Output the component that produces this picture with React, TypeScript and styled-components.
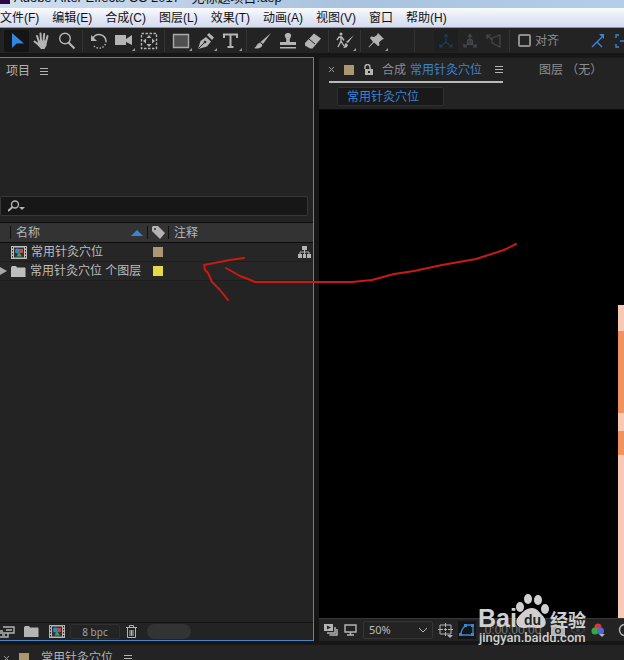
import React from 'react';
import styled, { createGlobalStyle } from 'styled-components';

const Global = createGlobalStyle`
  * { box-sizing: border-box; }
  body { margin: 0; background: #161616; }
  body, button, input, select, table {
    font-family: "Liberation Sans", "Noto Sans CJK SC", sans-serif;
    font-size: 12px;
    line-height: 16px;
  }
  button { border: 0; padding: 0; background: none; color: inherit; }
  svg { display: block; flex: none; }
`;

const Page = styled.div`
  position: relative;
  display: flex;
  flex-direction: column;
  height: 100vh;
  overflow: hidden;
  color: #b4b4b4;
  white-space: nowrap;
`;
const TitleBar = styled.header`
  display: flex;
  align-items: flex-end;
  gap: 4px;
  height: 8px;
  flex: none;
  overflow: hidden;
  background: linear-gradient(90deg, #d3dfef, #a9c3df 55%, #b3cee8);
  color: #111;
  font-size: 13px;
`;
const AppBadge = styled.span`
  width: 10px;
  height: 8px;
  border-bottom: 4px solid #d3dfef;
  background: #2a0b45;
`;
const TitleText = styled.span`
  line-height: 16px;
  margin-bottom: 2px;
`;
const MenuBar = styled.nav`
  display: flex;
  gap: 13px;
  align-items: center;
  height: 20px;
  flex: none;
  background: linear-gradient(#fafbfe, #e4e9f5 50%, #d5dcee);
  border-bottom: 1px solid #8f94a0;
  color: #111;
`;
const MenuItem = styled.button`
  color: #111;
`;
const Toolbar = styled.div`
  display: flex;
  align-items: center;
  height: 25px;
  flex: none;
  padding-left: 4px;
  background: #232323;
  overflow: hidden;
`;
const Tool = styled.button<{ $active?: boolean; $dim?: boolean }>`
  position: relative;
  display: grid;
  place-items: center;
  width: ${p => (p.$dim ? 24 : 25)}px;
  height: 22px;
  flex: none;
  color: ${p => (p.$dim ? (p.$active ? '#1f3c55' : '#45484b') : '#b4b4b4')};
  background: ${p => (p.$active ? (p.$dim ? '#1d1f21' : '#151515') : 'transparent')};
  border-radius: 2px;
`;
const Corner = styled.span`
  position: absolute;
  right: 1px;
  bottom: 1px;
  border-left: 3px solid transparent;
  border-bottom: 3px solid #9a9a9a;
`;
const Divider = styled.span<{ $wide?: boolean }>`
  width: 1px;
  height: 22px;
  margin: 0 ${p => (p.$wide ? 19 : 3)}px 0 ${p => (p.$wide ? 25 : 3)}px;
  background: #343434;
  flex: none;
`;
const SnapLabel = styled.label`
  display: flex;
  align-items: center;
  gap: 4px;
  margin: 0 32px 0 5px;
  color: #8d8d8d;
`;
const Check = styled.input`
  appearance: none;
  width: 13px;
  height: 13px;
  margin: 0;
  border: 2px solid #8d8d8d;
  border-radius: 2px;
`;
const SnapIcons = styled.div`
  display: flex;
  gap: 10px;
  color: #3b86d8;
`;
const Workspace = styled.main`
  display: flex;
  flex: 1;
  gap: 5px;
  min-height: 0;
  padding: 4px 0;
  background: #161616;
`;
const ProjectPanel = styled.section`
  display: flex;
  flex-direction: column;
  width: 314px;
  flex: none;
  background: #232323;
  border: solid #4787c8;
  border-width: 1px 1px 1px 0;
`;
const PanelHead = styled.div`
  display: flex;
  align-items: center;
  gap: 10px;
  height: 26px;
  padding-left: 6px;
`;
const Preview = styled.div`
  height: 112px;
`;
const SearchBox = styled.div`
  display: flex;
  align-items: center;
  gap: 4px;
  height: 20px;
  margin: 0 5px 6px 0;
  padding-left: 7px;
  background: #171717;
  border: 1px solid #373737;
  border-radius: 2px;
`;
const SearchInput = styled.input`
  flex: 1;
  height: 15px;
  border: 0;
  outline: 0;
  padding: 0;
  background: transparent;
  color: #ccc;
`;
const Items = styled.table`
  width: 100%;
  table-layout: fixed;
  border-collapse: collapse;
  text-align: left;
  td, th { padding: 0; font-weight: 400; }
`;
const HeadRow = styled.tr`
  height: 20px;
  background: #333;
  border: solid #0c0c0c;
  border-width: 1px 0;
`;
const HeadCell = styled.th`
  width: ${p => p.width}px;
`;
const HeadInner = styled.div<{ $pad?: number }>`
  display: flex;
  align-items: center;
  justify-content: space-between;
  height: 13px;
  padding: 0 4px 0 ${p => p.$pad ?? 5}px;
  border-left: 1px solid #111;
`;
const ItemRow = styled.tr`
  height: 19px;
  border-bottom: 1px solid #1d1d1d;
  background: #262626;
`;
const NameInner = styled.div`
  display: flex;
  align-items: center;
  gap: 4px;
  color: #bdbdbd;
`;
const Twirl = styled.span<{ $shown?: boolean }>`
  width: 7px;
  height: 8px;
  border-left: 7px solid ${p => (p.$shown ? '#aaa' : 'transparent')};
  border-top: 4px solid transparent;
  border-bottom: 4px solid transparent;
`;
const Swatch = styled.span<{ $color: string }>`
  display: block;
  width: 10px;
  height: 10px;
  flex: none;
  background: ${p => p.$color};
`;
const RowEnd = styled.div`
  display: flex;
  justify-content: flex-end;
  padding-right: 2px;
`;
const TagCell = styled.td`
  > span { margin-left: 6px; }
`;
const ProjectFoot = styled.footer`
  display: flex;
  align-items: center;
  height: 18px;
  margin-top: auto;
  gap: 9px;
  border-top: 1px solid #111;
`;
const Depth = styled.button`
  width: 50px;
  height: 15px;
  margin: 0 -4px;
  border: 1px solid #303030;
  border-radius: 2px;
  font-family: "Noto Sans", sans-serif;
  font-size: 10px;
  line-height: 12px;
  color: #9aa5ad;
`;
const ScrollThumb = styled.span`
  width: 44px;
  height: 15px;
  border-radius: 8px;
  background: #333;
`;
const CompPanel = styled.section`
  display: flex;
  flex-direction: column;
  flex: 1;
  min-width: 0;
  background: #232323;
  border-top: 1px solid #1b1b1b;
`;
const Tabs = styled.div`
  display: flex;
  gap: 36px;
  height: 25px;
  padding-left: 10px;
`;
const ActiveTab = styled.div`
  display: flex;
  align-items: center;
  height: 25px;
  border-bottom: 2px solid #b9b9b9;
`;
const CloseButton = styled.button`
  width: 6px;
  margin-right: 9px;
  color: #999;
`;
const LockButton = styled.button`
  margin: 0 9px 0 10px;
`;
const TabWord = styled.span`
  margin-right: 4px;
  color: #8d8d8d;
`;
const Blue = styled.span`
  color: #3c84d4;
`;
const MenuButton = styled.button<{ $gap?: number }>`
  margin-left: ${p => p.$gap ?? 0}px;
`;
const QuietTab = styled.button`
  height: 24px;
  color: #8d8d8d;
`;
const Crumbs = styled.div`
  padding: 4px 0 3px 18px;
  border-bottom: 1px solid #0c0c0c;
`;
const Crumb = styled.button`
  display: block;
  width: 107px;
  height: 19px;
  padding-left: 9px;
  text-align: left;
  background: #191919;
  border: 1px solid #303030;
  border-radius: 2px;
  color: #3c84d4;
`;
const Viewer = styled.div`
  display: flex;
  justify-content: flex-end;
  flex: 1;
  padding-top: 195px;
  background: #000;
`;
const Artwork = styled.div`
  width: 6px;
  background: linear-gradient(#f8c9b5 0 26px, #f0935f 26px 108px, #f8c9b5 108px 126px, #f0935f 126px 150px, #f8c9b5 150px);
`;
const CompFoot = styled.footer`
  display: flex;
  align-items: center;
  height: 23px;
  padding-left: 4px;
  gap: 5px;
  overflow: hidden;
  border-top: 1px solid #383838;
`;
const ZoomBox = styled.div`
  display: flex;
  align-items: center;
  width: 70px;
  height: 18px;
  padding-right: 5px;
  border: 1px solid #353535;
  border-radius: 2px;
  flex: none;
`;
const ZoomSelect = styled.select`
  appearance: none;
  flex: 1;
  min-width: 0;
  padding: 0 0 0 5px;
  border: 0;
  background: transparent;
  color: #bbb;
  font-family: "Noto Sans", sans-serif;
  font-size: 11px;
`;
const FootTool = styled.button<{ $boxed?: boolean; $w?: number }>`
  display: grid;
  place-items: center;
  width: ${p => p.$w ?? 15}px;
  height: 18px;
  flex: none;
  background: ${p => (p.$boxed ? '#141414' : 'none')};
`;
const Timecode = styled.button`
  width: 64px;
  flex: none;
  color: #777;
`;
const BottomPanel = styled.section`
  display: flex;
  align-items: flex-start;
  height: 15px;
  flex: none;
  overflow: hidden;
  padding: 5px 0 0 4px;
  background: #232323;
`;
const BottomTab = styled.div`
  display: flex;
  align-items: center;
`;
const BottomTitle = styled.span`
  margin: 0 11px 0 12px;
`;
const Annotation = styled.svg`
  position: absolute;
  left: 200px;
  top: 240px;
`;
const Watermark = styled.svg`
  position: absolute;
  left: 476px;
  top: 590px;
`;

const I = ({ w = 18, h = 18, children }: { w?: number; h?: number; children: React.ReactNode }) => (
  <svg width={w} height={h} viewBox={`0 0 ${w} ${h}`} fill="none" stroke="currentColor" strokeWidth="1.4" aria-hidden="true">
    {children}
  </svg>
);
const fill = { fill: 'currentColor', stroke: 'none' };

const ListIcon = () => <I w={8} h={9}><path d="M0 1.5h8M0 4.5h8M0 7.5h8" strokeWidth="1" /></I>;
const FilmIcon = () => (
  <I w={16} h={13}>
    <path d="M0 0h16v13H0z" {...fill} />
    <path d="M1.5 1v12M14.5 1v12" stroke="#222" strokeWidth="1" strokeDasharray="1.5 1.5" />
    <path d="M3 1.5h10v10H3z" fill="#333" stroke="none" />
    <circle cx="6.5" cy="5" r="2.5" fill="#3486cf" stroke="none" />
    <path d="M8 3h4v4H8z" fill="#c54b36" stroke="none" />
    <path d="M5.5 10.5 8 6l3 4.5z" fill="#3fa05a" stroke="none" />
  </I>
);
const FolderIcon = () => <I w={15} h={11}><path d="M0 1.5 1 0h4l1 1.5h8l.5.5v9H0z" {...fill} /></I>;

const axis = <path d="M9 10V3M9 10l-6 5M9 10l6 5M7 5l2-2.500L11 5M3 12v3h3M15 12v3h-3" strokeWidth="1.2" />;

const tools: Record<string, React.ReactNode> = {
  选取: <path d="M4 1v15l4.5-4.5H16z" fill="#3186e0" stroke="none" />,
  手形: (
    <g strokeLinecap="round" strokeWidth="2">
      <path d="M6 10 4 4M8 9 7.500 1.500M10.500 9l.700-7M13 10l1.500-6M6 13 1.500 9.500" />
      <path d="M5 8.500h9l-.5 5-2 3.500H8l-3.500-4z" {...fill} />
    </g>
  ),
  缩放: <g><circle cx="7" cy="6.500" r="5.300" /><path d="m10.500 10.500 6 6" strokeWidth="2.200" /></g>,
  旋转: (
    <g>
      <path d="M3 6a7 7 0 0 1 13 3" strokeWidth="1.600" />
      <path d="M16 9a7 7 0 0 1-12 5" strokeDasharray="1.500 1.500" />
      <path d="M1 3v6h6z" {...fill} />
    </g>
  ),
  摄像机: <path d="M0 3h11v4l6-4v10l-6-3v3H0z" {...fill} />,
  锚点: (
    <g>
      <path d="M1.500 1.500h15v15h-15z" strokeDasharray="2.500 1.500" />
      <path d="M9 3l2.500 3h-5zM9 15l2.500-3h-5zM3 9l3-2.500v5zM15 9l-3-2.500v5z" {...fill} />
    </g>
  ),
  矩形: <path d="M1.500 2.500h15v13h-15z" fill="#505050" stroke="#aaa" />,
  钢笔: (
    <g>
      <path d="M1 17 3.500 9 9 5l5 4.500-4 5z" {...fill} />
      <path d="m10 3 2-2 5 4.500-2 2.500z" {...fill} />
      <path d="m1.500 16.500 6-6" stroke="#232323" strokeWidth="1" />
      <circle cx="8" cy="10" r="1.300" fill="#232323" stroke="none" />
    </g>
  ),
  文字: <path d="M2 6V2.500h13V6M8.500 3v12M5.500 15h6" strokeWidth="2" />,
  画笔: <path d="M17 1 9 12l-2.500-2zM6 10.500 8.500 13C7 17 3 17 0 16c3-1 2-4 6-5.500z" {...fill} />,
  图章: <path d="M9 1c3 0 4 2.500 2.500 4.500-1 1.500-1 3-.5 4.500h6v3H1v-3h6c.5-1.500.5-3-.5-4.500C5 3.500 6 1 9 1zM1 15h16v1.500H1z" {...fill} />,
  橡皮擦: <g><path d="m1 11 9-9.500 7 5-8.500 10H6l-5-3z" {...fill} /><path d="m5 7 6 5" stroke="#232323" strokeWidth="1" /></g>,
  动态笔刷: (
    <g>
      <circle cx="5" cy="2" r="1.500" {...fill} />
      <path d="M5 4v5l-3 6M5 9l3 5M1 8l2-3 3 .500 2 3" />
      <path d="m18 3-6 8-2-1zM10 11l2 2c-1 3-3 3-5 3 2-1 1-4 3-5z" {...fill} />
    </g>
  ),
  操控点: <path d="m10 1 6 6-2 .5-3 3 .5 3-1.500.500-4-3.500-5 5-.500-.500 4.500-5L2 6l1-1.500 3 .500L9 3z" {...fill} />,
};
const flyouts = ['摄像机', '矩形', '钢笔', '文字', '动态笔刷', '操控点'];
const groups = [['选取', '手形', '缩放'], ['旋转', '摄像机', '锚点'], ['矩形', '钢笔', '文字'], ['画笔', '图章', '橡皮擦'], ['动态笔刷'], ['操控点']];
const menus = ['文件(F)', '编辑(E)', '合成(C)', '图层(L)', '效果(T)', '动画(A)', '视图(V)', '窗口', '帮助(H)'];
const rows = [
  { name: '常用针灸穴位', color: '#ab9873', folder: false },
  { name: '常用针灸穴位 个图层', color: '#e3d94b', folder: true },
];

export default function App() {
  return (
    <Page>
      <Global />
      <TitleBar><AppBadge /><TitleText>Adobe After Effects CC 2017 - 无标题项目.aep</TitleText></TitleBar>
      <MenuBar>{menus.map(m => <MenuItem key={m}>{m}</MenuItem>)}</MenuBar>
      <Toolbar>
        {groups.map((group, i) => (
          <React.Fragment key={group[0]}>
            {i > 0 && <Divider />}
            {group.map(name => (
              <Tool key={name} $active={name === '选取'} aria-label={name}>
                <I>{tools[name]}</I>
                {flyouts.includes(name) && <Corner />}
              </Tool>
            ))}
          </React.Fragment>
        ))}
        <Divider $wide />
        <Tool $dim $active aria-label="本地轴"><I>{axis}</I></Tool>
        <Tool $dim aria-label="世界轴"><I>{axis}<circle cx="9" cy="10" r="2.500" /></I></Tool>
        <Tool $dim aria-label="视图轴"><I><path d="M7 6l8-3v12l-8-4zM7 8 2 3M2 7V3h4" strokeWidth="1.200" /></I></Tool>
        <Divider />
        <SnapLabel><Check type="checkbox" />对齐</SnapLabel>
        <SnapIcons>
          <I w={14} h={14}><path d="m1 13 5-5 5 5M6 8l5-5" /><path d="M8 0h5v5z" {...fill} /></I>
          <I w={14} h={14}><path d="M4 1H1v3M1 10v3h3M10 1h3v3M5 7h4" /></I>
        </SnapIcons>
      </Toolbar>
      <Workspace>
        <ProjectPanel>
          <PanelHead><span>项目</span><MenuButton aria-label="面板菜单"><ListIcon /></MenuButton></PanelHead>
          <Preview />
          <SearchBox>
            <I w={17} h={12}><circle cx="7" cy="4.500" r="3.500" /><path d="M4.500 7 0 11" strokeWidth="2" /><path d="M11 7h6l-3 3z" {...fill} /></I>
            <SearchInput aria-label="搜索" />
          </SearchBox>
          <Items>
            <thead>
              <HeadRow>
                <HeadCell width={10} />
                <HeadCell width={137}><HeadInner>名称<I w={12} h={6}><path d="m0 6 6-6 6 6z" fill="#3c84d4" stroke="none" /></I></HeadInner></HeadCell>
                <HeadCell width={21} aria-label="标签"><HeadInner $pad={4}><I w={13} h={13}><path fillRule="evenodd" d="M0 1 1 0h5l7 7-5 6-8-8zM3 2a1 1 0 1 0 0 2 1 1 0 0 0 0-2z" {...fill} /></I></HeadInner></HeadCell>
                <HeadCell><HeadInner>注释</HeadInner></HeadCell>
              </HeadRow>
            </thead>
            <tbody>
              {rows.map(r => (
                <ItemRow key={r.name}>
                  <td colSpan={2}><NameInner><Twirl $shown={r.folder} />{r.folder ? <FolderIcon /> : <FilmIcon />}<span>{r.name}</span></NameInner></td>
                  <TagCell><Swatch $color={r.color} /></TagCell>
                  <td>{!r.folder && <RowEnd><I w={13} h={12}><path d="M4 0h5v4H4zM0 8h4v4H0zM5 8h3v4H5zM9 8h4v4H9z" {...fill} /><path d="M6.500 3v5M2 8V6h9v2" strokeWidth="1" /></I></RowEnd>}</td>
                </ItemRow>
              ))}
            </tbody>
          </Items>
          <ProjectFoot>
            <FootTool aria-label="解释素材"><I w={15} h={12}><path d="M3 1h11v6H8M3 5H0M6 4h6M0 7h8v4H0M2 9h3" /></I></FootTool>
            <FootTool aria-label="新建文件夹"><FolderIcon /></FootTool>
            <FootTool $w={17} aria-label="新建合成"><FilmIcon /></FootTool>
            <Depth>8 bpc</Depth>
            <FootTool $w={13} aria-label="删除"><I w={11} h={13}><path d="M0 2.500h11M3.500 2V.500h4V2M1.500 3v9.500h8V3M4 5v6M5.500 5v6M7 5v6" strokeWidth="1" /></I></FootTool>
            <ScrollThumb />
          </ProjectFoot>
        </ProjectPanel>
        <CompPanel>
          <Tabs>
            <ActiveTab>
              <CloseButton aria-label="关闭"><I w={5} h={5}><path d="m0 0 5 5M5 0 0 5" strokeWidth="1" /></I></CloseButton>
              <Swatch $color="#ab9873" />
              <LockButton aria-label="锁定"><I w={9} h={11}><path d="M1 5V3a2.500 2.500 0 0 1 5 0v2" /><path fillRule="evenodd" d="M1 5h8v6H1zM4 7v2h2V7z" {...fill} /></I></LockButton>
              <TabWord>合成</TabWord><Blue>常用针灸穴位</Blue>
              <MenuButton $gap={13} aria-label="合成菜单"><ListIcon /></MenuButton>
            </ActiveTab>
            <QuietTab>图层 （无）</QuietTab>
          </Tabs>
          <Crumbs><Crumb>常用针灸穴位</Crumb></Crumbs>
          <Viewer><Artwork /></Viewer>
          <CompFoot>
            <FootTool aria-label="始终预览"><I w={14} h={12}><path fillRule="evenodd" d="M0 0h9v7H0zM3 1.500v4l4-2z" {...fill} /><path d="M3 9h8V3M5.500 11H13V5" strokeWidth="1.500" /></I></FootTool>
            <FootTool aria-label="主查看器"><I w={13} h={12}><path d="M1 1h11v7H1zM6.500 8v3M3 11h7" /></I></FootTool>
            <ZoomBox>
              <ZoomSelect aria-label="放大率" defaultValue="50%"><option>50%</option><option>100%</option></ZoomSelect>
              <I w={8} h={5}><path d="m0 0 4 4 4-4" strokeWidth="1" /></I>
            </ZoomBox>
            <FootTool aria-label="网格"><I w={15} h={15}><path d="M2 2h11v9H2zM7.500 0v4M7.500 9v4M0 6.500h5M10 6.500h5M7.500 5v3M6 6.500h3" strokeWidth="1" /><path d="M9 12h6l-3 3z" {...fill} /></I></FootTool>
            <FootTool $boxed $w={18} aria-label="蒙版路径"><Blue><I w={16} h={14}><path d="M2 12C2 7 4 5 7 2h7v10z" /><path d="M0 10h3v3H0zM5 1h3v3H5zM12 1h3v3h-3zM12 10h3v3h-3z" {...fill} /></I></Blue></FootTool>
            <Timecode>0:00:00:00</Timecode>
            <FootTool aria-label="快照"><I w={14} h={11}><path fillRule="evenodd" d="M0 2h4l1-2h4l1 2h4v9H0zM7 3a3 3 0 1 0 0 6 3 3 0 0 0 0-6z" {...fill} /><circle cx="7" cy="6" r="1" /></I></FootTool>
            <FootTool aria-label="显示快照"><I w={14} h={10}><path d="M0 5q7-8 14 0-7 8-14 0z" stroke="#3a3a3a" /><circle cx="7" cy="5" r="2" fill="#3a3a3a" stroke="none" /></I></FootTool>
            <FootTool aria-label="显示通道"><I w={14} h={14}><g stroke="none"><circle cx="7" cy="4" r="3.500" fill="#e0342d" /><circle cx="4" cy="8" r="3.500" fill="#37a844" /><circle cx="9.500" cy="8" r="3.500" fill="#4c6bd9" /></g><path d="M8 11h6l-3 3z" {...fill} /></I></FootTool>
            <FootTool $w={30} aria-label="分辨率"><I w={14} h={14}><circle cx="7" cy="7" r="5.500" /></I></FootTool>
          </CompFoot>
        </CompPanel>
      </Workspace>
      <BottomPanel>
        <BottomTab>
          <CloseButton aria-label="关闭"><I w={5} h={5}><path d="m0 0 5 5M5 0 0 5" strokeWidth="1" /></I></CloseButton>
          <Swatch $color="#ab9873" /><BottomTitle>常用针灸穴位</BottomTitle>
          <MenuButton aria-label="时间轴菜单"><ListIcon /></MenuButton>
        </BottomTab>
      </BottomPanel>
      <Annotation width="320" height="64" viewBox="0 0 320 64" fill="none" stroke="#c91a14" strokeWidth="2" strokeLinecap="round" strokeLinejoin="round">
        <path d="m316 4-12 6-28 9-34 6-28 6-20 3-22 6-20 2H55l-7-3-8-3-7-4-7-4" />
        <path d="m44 18-14 2-26 5 1 5 3 3 4 9 8 8 8 10" />
      </Annotation>
      <Watermark width="124" height="60" viewBox="0 0 124 60" fill="#d0d0d0">
        <text x="2" y="37" fontFamily="'Liberation Sans', sans-serif" fontSize="25" fontWeight="700">Bai</text>
        <ellipse cx="44" cy="17" rx="4" ry="5" /><ellipse cx="52" cy="9" rx="4" ry="5" />
        <ellipse cx="62" cy="10" rx="4" ry="5" /><ellipse cx="69" cy="19" rx="4" ry="5" />
        <path d="M56 18c5 0 7 4 11 8 5 6 3 12-4 12-4 0-10-1-14 0-7 1-12-6-6-12 4-4 7-8 13-8z" />
        <text x="48" y="35" fontFamily="'Liberation Sans', sans-serif" fontSize="14" fontWeight="700" fill="#222">du</text>
        <text x="74" y="37" fontSize="18" fontWeight="700" fontFamily="'Noto Sans CJK SC', sans-serif">经验</text>
        <text x="3" y="52" fontSize="13" fontWeight="500" fontFamily="Roboto, sans-serif">jingyan.baidu.com</text>
      </Watermark>
    </Page>
  );
}
